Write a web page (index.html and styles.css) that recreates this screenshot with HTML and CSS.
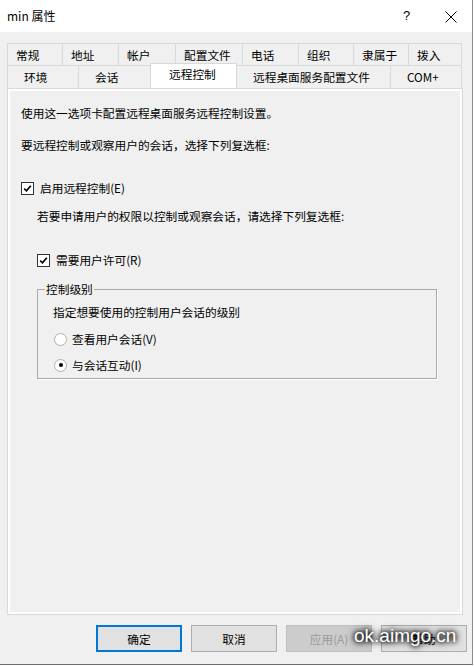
FILE: index.html
```html
<!DOCTYPE html>
<html>
  <head>
    <meta charset="utf-8">
    <title>min 属性</title>
    <link rel="stylesheet" href="styles.css">
  </head>
  <body>
    <div class="window">
      <div class="titlebar">
        <span class="title">min 属性</span>
        <span class="help">?</span>
        <span class="close">
          <svg width="12" height="12" viewBox="0 0 12 12"><path d="M0.5 0.5 L11.5 11.5 M11.5 0.5 L0.5 11.5" stroke="#000" stroke-width="1"/></svg>
        </span>
      </div>

      <div class="sheet">
        <div class="tabs">
          <div class="tab-row row-top">
            <div class="tab">常规</div>
            <div class="tab">地址</div>
            <div class="tab">帐户</div>
            <div class="tab">配置文件</div>
            <div class="tab">电话</div>
            <div class="tab">组织</div>
            <div class="tab">隶属于</div>
            <div class="tab">拨入</div>
          </div>
          <div class="tab-row row-bottom">
            <div class="tab">环境</div>
            <div class="tab">会话</div>
            <div class="tab active">远程控制</div>
            <div class="tab">远程桌面服务配置文件</div>
            <div class="tab">COM+</div>
          </div>
        </div>

        <div class="page">
          <p class="line first">使用这一选项卡配置远程桌面服务远程控制设置。</p>
          <p class="line second">要远程控制或观察用户的会话，选择下列复选框:</p>

          <label class="check enable">
            <span class="box">
              <svg width="9" height="9" viewBox="0 0 9 9"><path d="M1.2 4.6 L3.5 6.8 L7.8 1.8" fill="none" stroke="#000" stroke-width="1.7"/></svg>
            </span>
            启用远程控制(E)
          </label>

          <div class="indent">
            <p class="line ask">若要申请用户的权限以控制或观察会话，请选择下列复选框:</p>

            <label class="check permit">
              <span class="box">
                <svg width="9" height="9" viewBox="0 0 9 9"><path d="M1.2 4.6 L3.5 6.8 L7.8 1.8" fill="none" stroke="#000" stroke-width="1.7"/></svg>
              </span>
              需要用户许可(R)
            </label>

            <fieldset class="group">
              <legend>控制级别</legend>
              <p class="line">指定想要使用的控制用户会话的级别</p>
              <label class="radio view"><span class="dot"></span>查看用户会话(V)</label>
              <label class="radio interact"><span class="dot on"></span>与会话互动(I)</label>
            </fieldset>
          </div>
        </div>
      </div>

      <div class="buttons">
        <button class="btn default">确定</button>
        <button class="btn">取消</button>
        <button class="btn disabled">应用(A)</button>
        <button class="btn">帮助</button>
      </div>

      <div class="watermark">ok.aimgo.cn</div>
    </div>
  </body>
</html>
```

FILE: styles.css
```css
body {
  margin: 0;
  background: #ffffff;
  font-family: "Noto Sans CJK SC", "Noto Sans", sans-serif;
  font-size: 11.7px;
  color: #000;
}

.window {
  position: relative;
  width: 472px;
  height: 664px;
  background: #f0f0f0;
  border-right: 1px solid #8a8a8a;
  border-bottom: 1px solid #6e6e6e;
  display: flex;
  flex-direction: column;
}

.titlebar {
  height: 32px;
  background: #ffffff;
  display: flex;
  align-items: center;
  padding-left: 7px;
}

.title {
  font-size: 12px;
  flex: 1;
  margin-top: -2px;
}

.help {
  font-family: "Liberation Sans", sans-serif;
  font-size: 13px;
  width: 12px;
  margin-right: 30px;
  margin-top: -2px;
}

.close {
  width: 12px;
  height: 12px;
  margin-right: 15px;
  margin-top: -2px;
}

.sheet {
  padding: 11px 9px 0 7px;
}

.tab-row {
  display: grid;
}

.row-top {
  grid-template-columns: 55px 56px 57px 67px 56px 55px 55px 54px;
  height: 22px;
}

.row-bottom {
  grid-template-columns: 71px 72px 87px 153px 72px;
  height: 23px;
}

.tab {
  border: 1px solid #d9d9d9;
  border-right: none;
  border-bottom: none;
  background: #f0f0f0;
  display: flex;
  align-items: center;
  line-height: 1;
}

.row-top .tab {
  padding-left: 8px;
}

.row-bottom .tab {
  padding-left: 16px;
}

.tab:last-child {
  border-right: 1px solid #d9d9d9;
}

.tab.active {
  background: #ffffff;
  margin-top: -2px;
  height: 25px;
  position: relative;
  z-index: 1;
  align-items: flex-start;
  padding-top: 4px;
  padding-left: 18px;
  box-sizing: border-box;
  border-right: 1px solid #d9d9d9;
}

.tab.active + .tab {
  border-left: none;
}

.page {
  height: 527px;
  border: 1px solid #d9d9d9;
  box-shadow: inset 2px 2px 0 #ffffff, inset -2px -2px 0 #ffffff;
  padding: 0 13px;
  box-sizing: border-box;
}

.line {
  margin: 0;
  line-height: 16px;
}

.first {
  margin-top: 16px;
}

.second {
  margin-top: 16px;
}

.check {
  display: flex;
  align-items: center;
  line-height: 16px;
}

.enable {
  margin-top: 27px;
}

.box {
  width: 11px;
  height: 11px;
  border: 1px solid #333;
  background: #fff;
  margin-right: 6px;
  display: flex;
  align-items: center;
  justify-content: center;
}

.indent {
  padding-left: 16px;
}

.ask {
  margin-top: 12px;
}

.permit {
  margin-top: 28px;
}

.group {
  margin: 13px 12px 0 0;
  padding: 7px 0 0 15px;
  border: 1px solid #a9a9a9;
  box-shadow: 1px 1px 0 #ffffff;
  height: 98px;
  box-sizing: border-box;
}

.group legend {
  padding: 0 1px;
  margin-left: -8px;
  line-height: 16px;
}

.radio {
  display: flex;
  align-items: center;
  line-height: 16px;
  margin-top: 10px;
  padding-left: 1px;
}

.view {
  margin-top: 11px;
}

.dot {
  width: 11px;
  height: 11px;
  border-radius: 50%;
  border: 1px solid #b0b0b0;
  background: #fff;
  margin-right: 5px;
  display: flex;
  align-items: center;
  justify-content: center;
}

.dot.on::after {
  content: "";
  width: 4px;
  height: 4px;
  border-radius: 50%;
  background: #000;
}

.buttons {
  display: flex;
  gap: 9px;
  padding: 10px 0 0 96px;
}

.btn {
  width: 86px;
  height: 27px;
  background: #e1e1e1;
  border: 1px solid #adadad;
  font-family: inherit;
  font-size: 11.7px;
  color: #000;
  padding: 0;
}

.btn.default {
  border: 2px solid #0078d7;
}

.btn.disabled {
  background: #cccccc;
  border-color: #bfbfbf;
  color: #9a9a9a;
}

.watermark {
  position: absolute;
  left: 354px;
  top: 625px;
  font-family: "Liberation Sans", sans-serif;
  font-size: 19px;
  color: #ffffff;
  text-shadow: 0 0 4px #000, 0 0 6px #000, 0 0 8px rgba(0, 0, 0, 0.7);
}
```
